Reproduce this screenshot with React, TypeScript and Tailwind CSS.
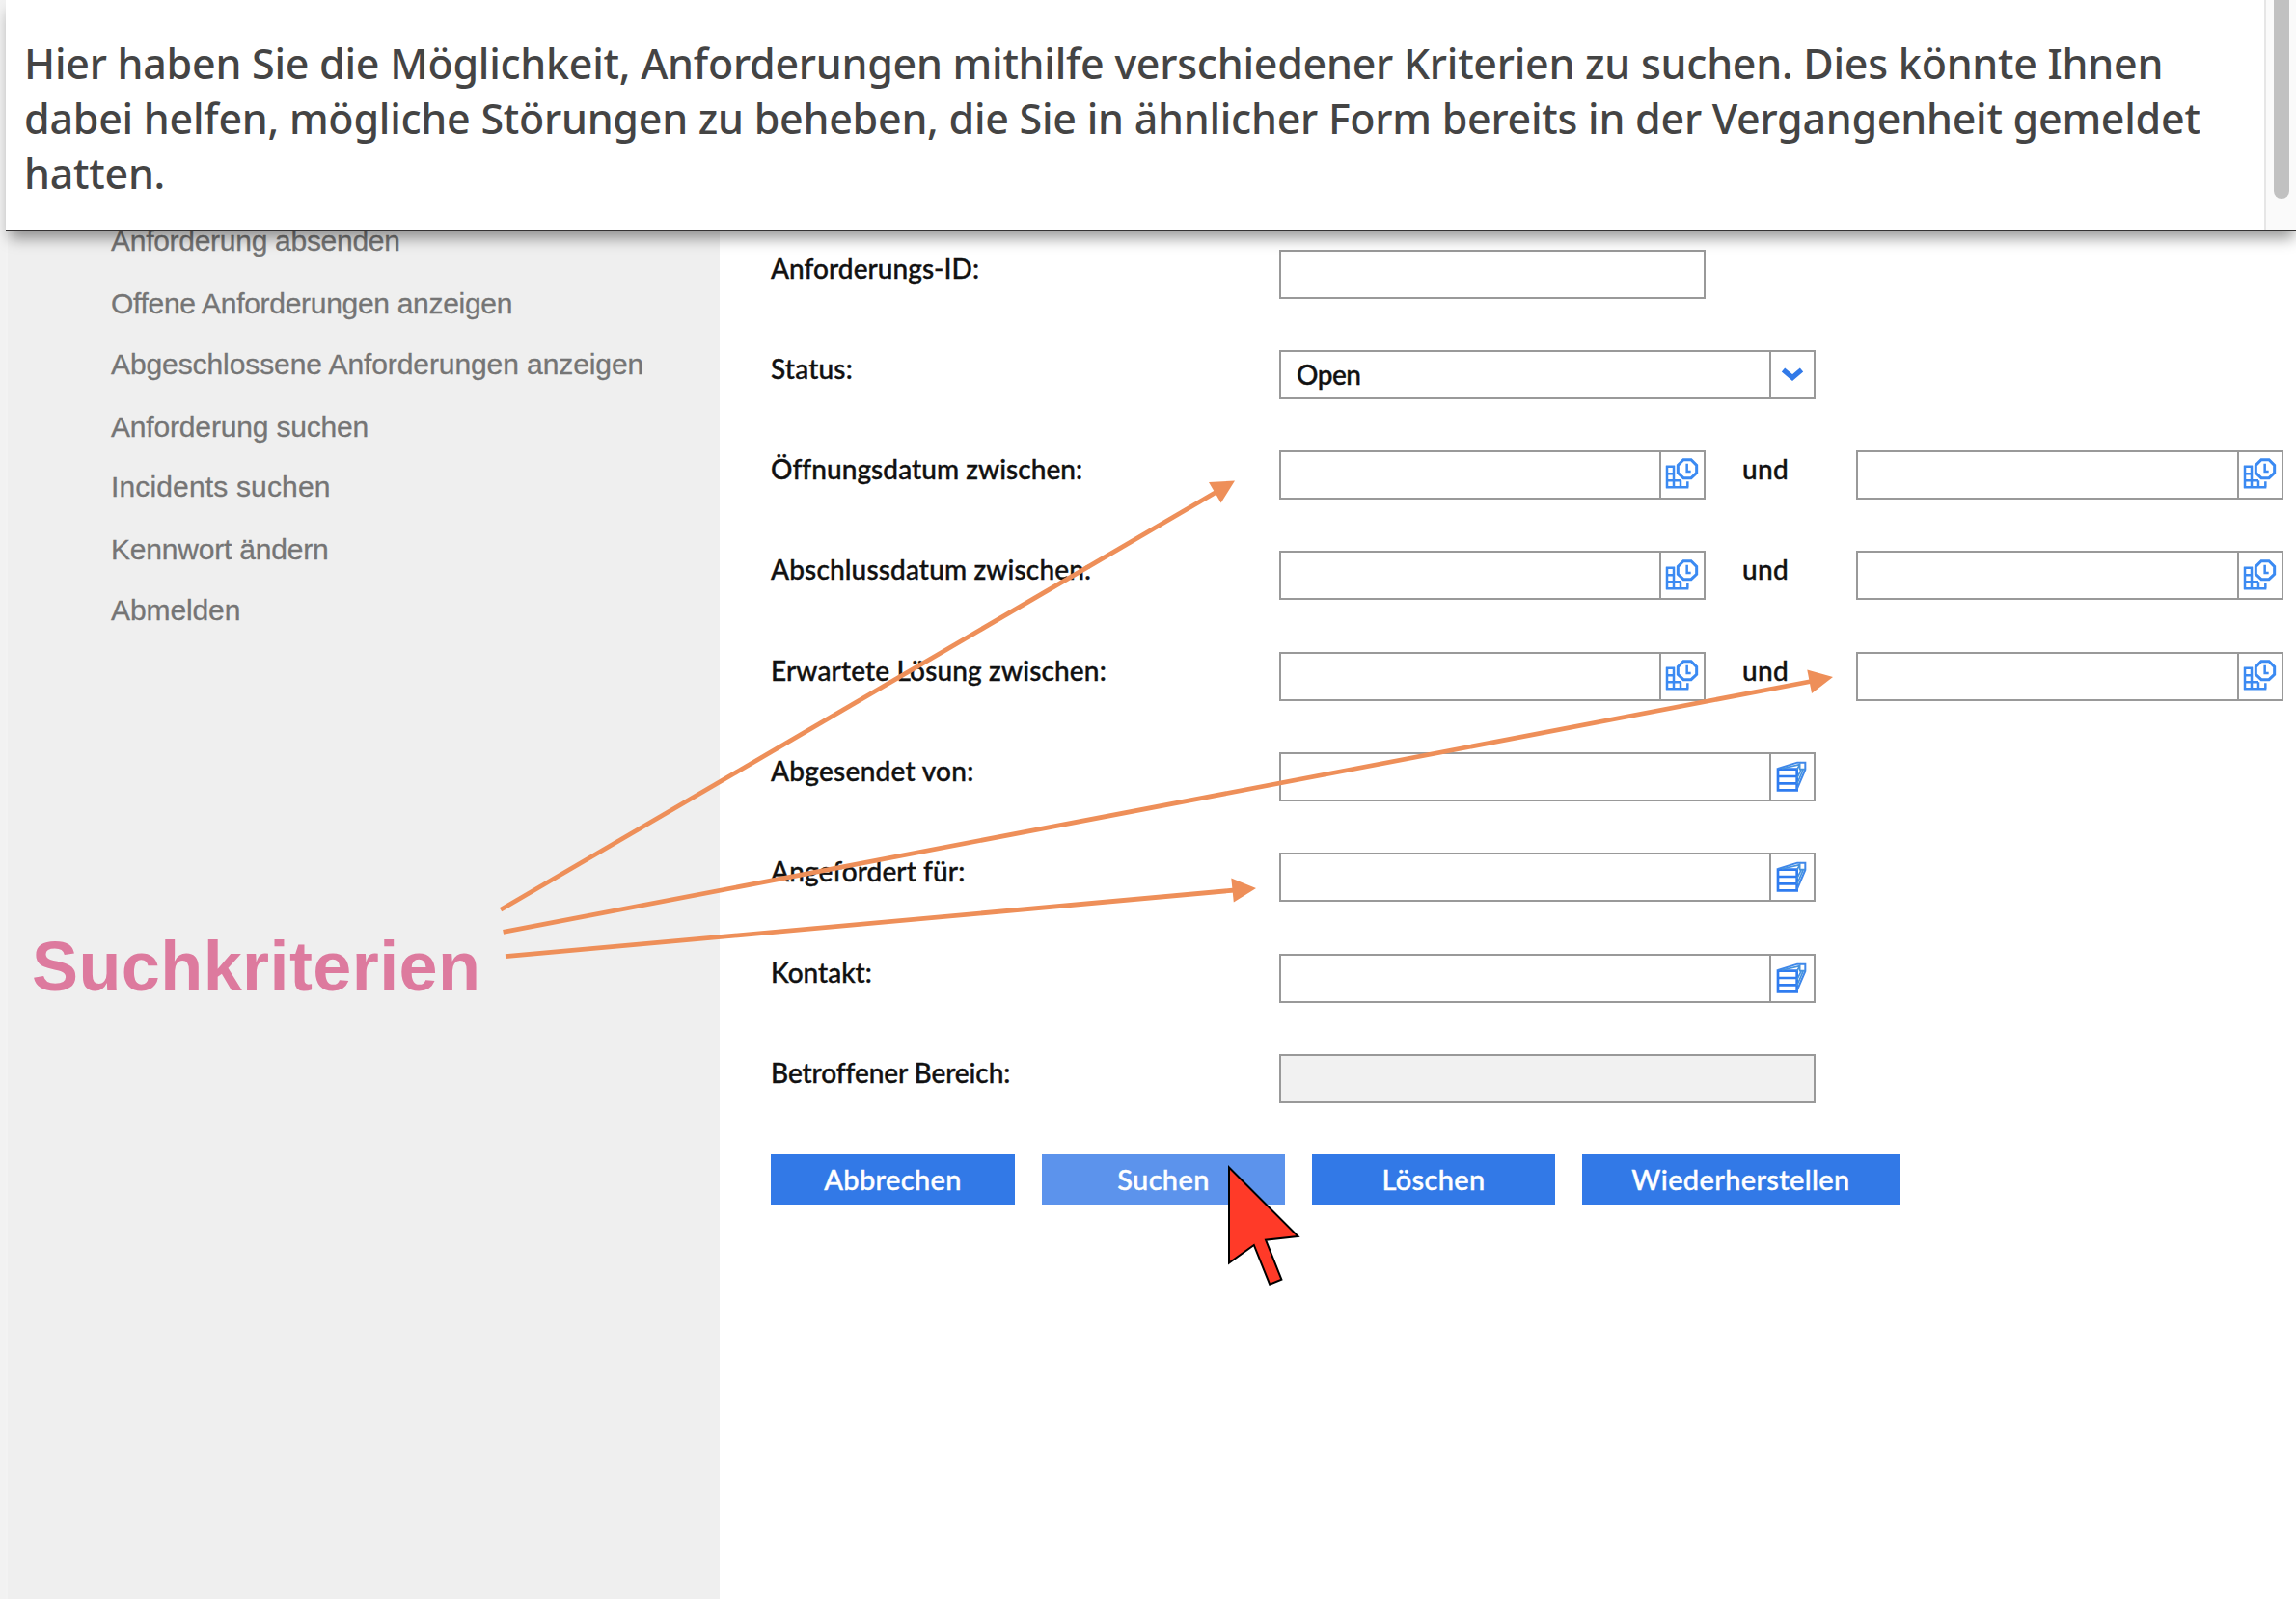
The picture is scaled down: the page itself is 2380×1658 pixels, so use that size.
import React from 'react';

const navItems = [
  { text: 'Anforderung absenden', style: 'h-[65px] tracking-[-0.28px]' },
  { text: 'Offene Anforderungen anzeigen', style: 'h-[63px] tracking-[-0.3px]' },
  { text: 'Abgeschlossene Anforderungen anzeigen', style: 'h-[65px] tracking-[-0.09px]' },
  { text: 'Anforderung suchen', style: 'h-[62px] tracking-[-0.17px]' },
  { text: 'Incidents suchen', style: 'h-[65px] tracking-[0.15px]' },
  { text: 'Kennwort ändern', style: 'h-[63px] tracking-[-0.2px]' },
  { text: 'Abmelden', style: 'h-[64px] tracking-[-0.1px]' },
];

function CalendarIcon() {
  return (
    <svg viewBox="135 100 120 110" className="mb-0.5 h-[36.67px] w-[40px]" fill="none" stroke="#3b8af2" strokeWidth="7.5">
      <path d="M147 129V200M168 129V200M144 132H171M144 155H171M144 176H189M144 197H214M189 176V197M211 179V197" />
      <path d="M198 111H222L239 128V152L222 168H198L181 152V128Z" strokeWidth="9" />
      <path d="M209 123V148H221" strokeWidth="7.5" />
    </svg>
  );
}

function RecordsIcon() {
  return (
    <svg viewBox="57 77 120 110" className="mb-0.5 h-[36.67px] w-[40px]" fill="none" stroke="#2f7cf0" strokeWidth="8">
      <path d="M72 112H131V177H72ZM72 134H131M72 156H131" />
      <path d="M72 110L132 91H157V113L131 174" strokeWidth="6" stroke="#3f88ea" />
      <path d="M84 110L140 97M131 113L140 97V112H157M131 140L145 112M131 158L151 112" strokeWidth="5" stroke="#4592de" />
    </svg>
  );
}

function ChevronIcon() {
  return (
    <svg viewBox="0 0 40 36" className="mb-0.5 h-9 w-10" fill="none" stroke="#327ae8" strokeWidth="5.2">
      <path d="M10.500 14.500L20 22.500L29.500 14.500" />
    </svg>
  );
}

type FieldProps = { size?: string; icon?: React.ReactNode; text?: string; disabled?: boolean };

function Field({ size = 'w-[441px]', icon, text, disabled }: FieldProps) {
  return (
    <div
      className={`flex h-[51px] shrink-0 items-stretch border-2 border-[#999] ${size} ${disabled ? 'bg-[#f1f1f1]' : 'bg-white'}`}
    >
      <div className="flex flex-1 items-center pl-4 text-[28px] leading-[34px] tracking-[-0.5px]">{text}</div>
      {icon && <div className="flex w-[46px] items-center justify-center border-l-2 border-[#999]">{icon}</div>}
    </div>
  );
}

function Row({ label, tracking, children }: { label: string; tracking: string; children: React.ReactNode }) {
  return (
    <div className="flex h-[104.3px]">
      <div className={`w-[527px] shrink-0 pt-[2px] text-[28px] leading-[34px] ${tracking}`}>{label}</div>
      {children}
    </div>
  );
}

function DateRange() {
  return (
    <>
      <Field size="w-[442px]" icon={<CalendarIcon />} />
      <div className="w-[156px] shrink-0 pt-[2px] pl-[38px] text-[28px] leading-[34px] tracking-[0.3px]">und</div>
      <Field size="w-[443px]" icon={<CalendarIcon />} />
    </>
  );
}

function Button({ children, className }: { children: React.ReactNode; className: string }) {
  return (
    <button className={`flex h-[52px] items-center justify-center text-[29px] tracking-[0.35px] text-white ${className}`}>
      {children}
    </button>
  );
}

function Annotations() {
  return (
    <svg viewBox="0 0 2380 1658" className="pointer-events-none absolute inset-0 h-[1658px] w-[2380px]">
      <g stroke="#ee8f59" strokeWidth="4.8">
        <path d="M519 943.3L1262 509.500" />
        <path d="M521.6 966.3L1880 706" />
        <path d="M524 991.700L1280 923" />
      </g>
      <g fill="#ee8f59">
        <path d="M1280 498.500L1253 500L1265.600 521.500Z" />
        <path d="M1900 702L1873.300 694.600L1878 719Z" />
        <path d="M1302 921L1276.300 910.500L1278.800 935.500Z" />
      </g>
      <path
        d="M1274 1210.500L1345.500 1282L1312 1285.700L1328.400 1326.700L1316.200 1331.700L1299.800 1291L1274 1309.500Z"
        fill="#ff3a28"
        stroke="#000"
        strokeWidth="2"
      />
    </svg>
  );
}

export default function App() {
  return (
    <div className="relative flex h-[1658px] w-[2380px] flex-col overflow-hidden bg-[#f2f2f2]">
      <header className="relative z-10 ml-1.5 flex h-[240px] shrink-0 border-b-2 border-[#343233] bg-white shadow-[1px_10px_14px_-3px_rgba(0,0,0,0.4)]">
        <p className="flex-1 pt-[37px] pl-[19px] font-['Noto_Sans',sans-serif] text-[43px] leading-[57px] font-medium tracking-[-0.26px] whitespace-nowrap text-[#444]">
          Hier haben Sie die Möglichkeit, Anforderungen mithilfe verschiedener Kriterien zu suchen. Dies könnte Ihnen
          <br />
          dabei helfen, mögliche Störungen zu beheben, die Sie in ähnlicher Form bereits in der Vergangenheit gemeldet
          <br />
          hatten.
        </p>
        <div className="flex w-[33px] shrink-0 border-l-2 border-[#e6e6e6] bg-[#fafafa] pl-2">
          <div className="h-[206px] w-4 rounded-b-full bg-[#c1c1c1]" />
        </div>
      </header>

      <div className="flex min-h-0 flex-1 pl-1.5">
        <aside className="flex w-[740px] shrink-0 flex-col border-l-2 border-[#f3f3f3] bg-[#efefef] font-['Liberation_Sans',sans-serif]">
          <ul className="-mt-[7px] pl-[107px] text-[30px] leading-[34px] text-[#757575] [-webkit-text-stroke:0.3px]">
            {navItems.map((item) => (
              <li key={item.text} className={item.style}>
                {item.text}
              </li>
            ))}
          </ul>
          <div className="mt-[280px] pl-[25px] text-[72px] leading-[84px] font-bold tracking-[0.4px] text-[#dd7a9e]">
            Suchkriterien
          </div>
        </aside>

        <main className="flex-1 overflow-hidden bg-white pt-[18.5px] pl-[53px] font-['Lato',sans-serif] font-medium text-[#111] [-webkit-text-stroke:0.4px]">
          <Row label="Anforderungs-ID:" tracking="tracking-[0.05px]">
            <Field size="w-[442px]" />
          </Row>
          <Row label="Status:" tracking="tracking-[0.2px]">
            <Field size="w-[556px]" text="Open" icon={<ChevronIcon />} />
          </Row>
          <Row label="Öffnungsdatum zwischen:" tracking="tracking-[0.06px]">
            <DateRange />
          </Row>
          <Row label="Abschlussdatum zwischen:" tracking="tracking-[0.15px]">
            <DateRange />
          </Row>
          <Row label="Erwartete Lösung zwischen:" tracking="tracking-[0.15px]">
            <DateRange />
          </Row>
          <Row label="Abgesendet von:" tracking="tracking-[0.28px]">
            <Field size="w-[556px]" icon={<RecordsIcon />} />
          </Row>
          <Row label="Angefordert für:" tracking="tracking-[0.1px]">
            <Field size="w-[556px]" icon={<RecordsIcon />} />
          </Row>
          <Row label="Kontakt:" tracking="tracking-normal">
            <Field size="w-[556px]" icon={<RecordsIcon />} />
          </Row>
          <Row label="Betroffener Bereich:" tracking="tracking-[-0.08px]">
            <Field size="w-[556px]" disabled />
          </Row>
          <div className="flex gap-7">
            <Button className="w-[253px] bg-[#3279e7]">Abbrechen</Button>
            <Button className="w-[252px] bg-[#5c93ec]">Suchen</Button>
            <Button className="w-[252px] bg-[#3279e7]">Löschen</Button>
            <Button className="w-[329px] bg-[#3279e7]">Wiederherstellen</Button>
          </div>
        </main>
      </div>

      <Annotations />
    </div>
  );
}
